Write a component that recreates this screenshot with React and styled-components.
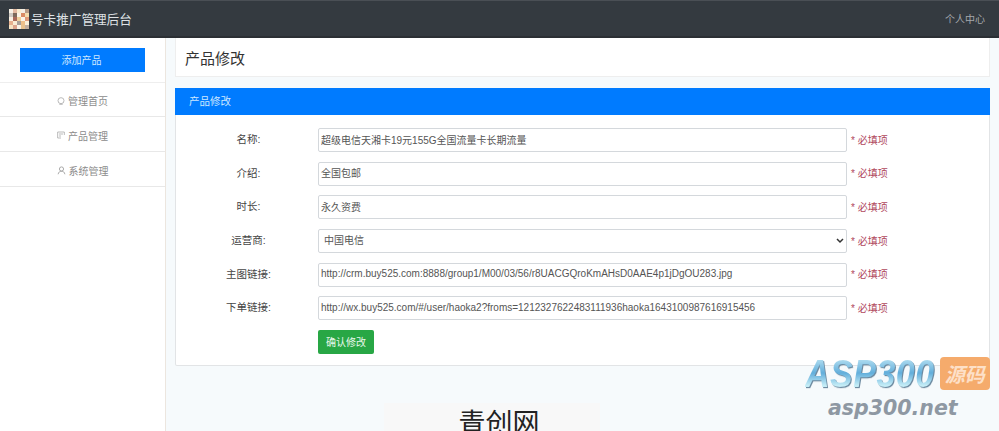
import React from "react";
import styled, { createGlobalStyle } from "styled-components";

const Global = createGlobalStyle`
  html, body { margin: 0; padding: 0; height: 100%; overflow: hidden; }
  body {
    background: #f6fafc;
    font-family: "Liberation Sans", "Noto Sans CJK SC", sans-serif;
    color: #444;
  }
`;

const Page = styled.div`
  position: relative;
  width: 999px;
  height: 431px;
  overflow: hidden;
`;

const Header = styled.header`
  height: 38px;
  box-sizing: border-box;
  background: #343a40;
  border-top: 1px solid #4a4f55;
  border-bottom: 2px solid #2b2f34;
  display: flex;
  align-items: center;
  justify-content: space-between;
  padding: 0 14px 0 9px;
`;

const Brand = styled.div`
  display: flex;
  align-items: center;
  gap: 2px;
  color: #dfe2e5;
  font-size: 12.6px;
`;

const UserLink = styled.span`
  color: #a4a8ac;
  font-size: 10px;
`;

const Body = styled.div`
  display: flex;
  height: 393px;
`;

const Sidebar = styled.aside`
  width: 166px;
  box-sizing: border-box;
  background: #fff;
  border-right: 1px solid #ece6df;
  padding-top: 10px;
`;

const AddButton = styled.div`
  width: 125px;
  height: 24px;
  margin: 0 0 10px 20px;
  padding: 0 2px 2px 0;
  box-sizing: border-box;
  background: #007bff;
  color: #cfe8ff;
  font-size: 10px;
  display: flex;
  align-items: center;
  justify-content: center;
`;

const NavItem = styled.div`
  height: 35px;
  box-sizing: border-box;
  border-top: ${(p) => (p.$first ? "1px solid #eee" : "none")};
  border-bottom: 1px solid #e8e8e8;
  display: flex;
  align-items: center;
  justify-content: center;
  gap: 3px;
  padding: 2px 0 0 0;
  color: #8c8c8c;
  font-size: 10px;
`;

const Main = styled.main`
  flex: 1;
  padding: 0 9px 0 9px;
  display: flex;
  flex-direction: column;
`;

const TitleBar = styled.div`
  flex: none;
  height: 39px;
  box-sizing: border-box;
  background: #fff;
  border: 1px solid #eee;
  border-top: none;
  padding-left: 9px;
  display: flex;
  align-items: center;
  font-size: 15px;
  color: #333;
`;

const Card = styled.section`
  flex: none;
  margin-top: 11px;
  height: 278px;
  box-sizing: border-box;
  background: #fff;
  border: 1px solid #e2e4e6;
  border-top: none;
  border-radius: 2px;
`;

const CardHead = styled.div`
  height: 27px;
  box-sizing: border-box;
  margin: 0 -1px;
  padding: 0 0 2px 14px;
  background: #007bff;
  color: #cfe8ff;
  font-size: 10.5px;
  display: flex;
  align-items: center;
`;

const Form = styled.div`
  padding-top: 13px;
  display: flex;
  flex-direction: column;
  gap: 9.7px;
`;

const Row = styled.div`
  display: flex;
  align-items: center;
  height: 24px;
`;

const Label = styled.label`
  width: 85px;
  flex: none;
  margin: 0 27px 3px 30px;
  text-align: center;
  font-size: 10.5px;
  color: #444;
`;

const fieldCss = `
  width: 529px;
  height: 24px;
  box-sizing: border-box;
  background: #fff;
  border: 1px solid #d4d8dc;
  border-radius: 2px;
  color: #555;
  font-size: 10px;
  font-family: "Liberation Sans", "Noto Sans CJK SC", sans-serif;
  outline: none;
`;

const Input = styled.input`
  ${fieldCss}
  padding: 0 2px 2px;
`;

const Select = styled.select`
  ${fieldCss}
  appearance: none;
  padding: 0 5px 2px;
  background: #fff url("data:image/svg+xml,%3Csvg xmlns='http://www.w3.org/2000/svg' width='8' height='6'%3E%3Cpath d='M1 1l3 3 3-3' fill='none' stroke='%23333' stroke-width='1.5'/%3E%3C/svg%3E") no-repeat right 2px center;
`;

const Required = styled.span`
  margin: 0 0 2px 4px;
  color: #b0475c;
  font-size: 10px;
`;

const Submit = styled.div`
  width: 56px;
  height: 24px;
  box-sizing: border-box;
  margin-left: 142px;
  padding-bottom: 1px;
  background: #28a745;
  border-radius: 2px;
  color: #e8f8ec;
  font-size: 10px;
  display: flex;
  align-items: center;
  justify-content: center;
`;

const Footer = styled.div`
  flex: none;
  margin: 37px 0 0 209px;
  width: 216px;
  height: 60px;
  box-sizing: border-box;
  padding: 1px 0 0 14px;
  background: #f8f8f8;
  text-align: center;
  color: #222;
  font-size: 27px;
  line-height: 40px;
`;

const Watermark = styled.div`
  position: absolute;
  left: 805px;
  top: 355px;
  width: 190px;
`;

const WatermarkTop = styled.div`
  display: flex;
  align-items: center;
  gap: 5px;
`;

const WatermarkWord = styled.span`
  display: inline-block;
  transform: scaleY(1.15);
  font-family: "Liberation Sans", sans-serif;
  font-size: 34px;
  line-height: 36px;
  font-weight: bold;
  font-style: italic;
  letter-spacing: 0.5px;
  background: linear-gradient(180deg, #a8d8ee 20%, #62aedb 50%, #c4ecf6 80%);
  -webkit-background-clip: text;
  background-clip: text;
  color: transparent;
  filter: drop-shadow(1px 1px 0 #6d8aa0);
`;

const WatermarkTag = styled.span`
  width: 50px;
  height: 33px;
  background: #f5ab6c;
  border-radius: 4px;
  color: #fde0c8;
  font-size: 20px;
  font-style: italic;
  font-weight: bold;
  display: flex;
  align-items: center;
  justify-content: center;
`;

const WatermarkNet = styled.div`
  margin: 4px 0 0 23px;
  font-family: "DejaVu Sans", sans-serif;
  font-size: 20.5px;
  line-height: 26px;
  font-weight: bold;
  font-style: italic;
  color: #8e98a3;
`;

// small pale mosaic logo, colours picked by eye
const logoCells = [
  "#f7f1e6", "#e2b9a0", "#f9ecd0", "#f4eee4", "#b89c88",
  "#cfc9c2", "#7d6a5c", "#fbf4e6", "#d98b66", "#f3dcae",
  "#f8f0e2", "#a8695a", "#efcf9a", "#faf4ea", "#e09a78",
  "#e6b08e", "#f9ecd4", "#a89f98", "#efc08a", "#fbf0da",
  "#f6e3c2", "#dca48c", "#faf3e6", "#e9c28e", "#c4b0a0",
];

const Logo = () => (
  <svg width="20" height="20" viewBox="0 0 5 5">
    {logoCells.map((c, i) => (
      <rect key={i} x={i % 5} y={Math.floor(i / 5)} width="1" height="1" fill={c} />
    ))}
  </svg>
);

const HomeIcon = () => (
  <svg width="8" height="8" viewBox="0 0 12 12" fill="none" stroke="#aaa" strokeWidth="1.2">
    <circle cx="6" cy="5.5" r="4.5" />
    <path d="M3.5 11h5" />
  </svg>
);

const ListIcon = () => (
  <svg width="8" height="8" viewBox="0 0 12 12" fill="none" stroke="#aaa" strokeWidth="1.2">
    <path d="M11 6V1.5H1v9h5" />
    <path d="M3 4.5h6M3 7.5h3" />
  </svg>
);

const UserIcon = () => (
  <svg width="9" height="9" viewBox="0 0 12 12" fill="none" stroke="#999" strokeWidth="1.1">
    <circle cx="6" cy="4" r="2.8" />
    <path d="M1.5 11c.5-3 2.3-4 4.5-4s4 1 4.5 4" />
  </svg>
);

const fields = [
  { label: "名称:", value: "超级电信天湘卡19元155G全国流量卡长期流量" },
  { label: "介绍:", value: "全国包邮" },
  { label: "时长:", value: "永久资费" },
  { label: "运营商:", value: "中国电信", select: true },
  { label: "主图链接:", value: "http://crm.buy525.com:8888/group1/M00/03/56/r8UACGQroKmAHsD0AAE4p1jDgOU283.jpg" },
  { label: "下单链接:", value: "http://wx.buy525.com/#/user/haoka2?froms=1212327622483111936haoka1643100987616915456" },
];

export default function App() {
  return (
    <Page>
      <Global />
      <Header>
        <Brand>
          <Logo />
          号卡推广管理后台
        </Brand>
        <UserLink>个人中心</UserLink>
      </Header>
      <Body>
        <Sidebar>
          <AddButton>添加产品</AddButton>
          <NavItem $first><HomeIcon />管理首页</NavItem>
          <NavItem><ListIcon />产品管理</NavItem>
          <NavItem><UserIcon />系统管理</NavItem>
        </Sidebar>
        <Main>
          <TitleBar>产品修改</TitleBar>
          <Card>
            <CardHead>产品修改</CardHead>
            <Form>
              {fields.map((f) => (
                <Row key={f.label}>
                  <Label>{f.label}</Label>
                  {f.select ? (
                    <Select defaultValue={f.value}>
                      <option>{f.value}</option>
                    </Select>
                  ) : (
                    <Input defaultValue={f.value} />
                  )}
                  <Required>* 必填项</Required>
                </Row>
              ))}
              <Submit>确认修改</Submit>
            </Form>
          </Card>
          <Footer>青创网</Footer>
        </Main>
      </Body>
      <Watermark>
        <WatermarkTop>
          <WatermarkWord>ASP300</WatermarkWord>
          <WatermarkTag>源码</WatermarkTag>
        </WatermarkTop>
        <WatermarkNet>asp300.net</WatermarkNet>
      </Watermark>
    </Page>
  );
}
